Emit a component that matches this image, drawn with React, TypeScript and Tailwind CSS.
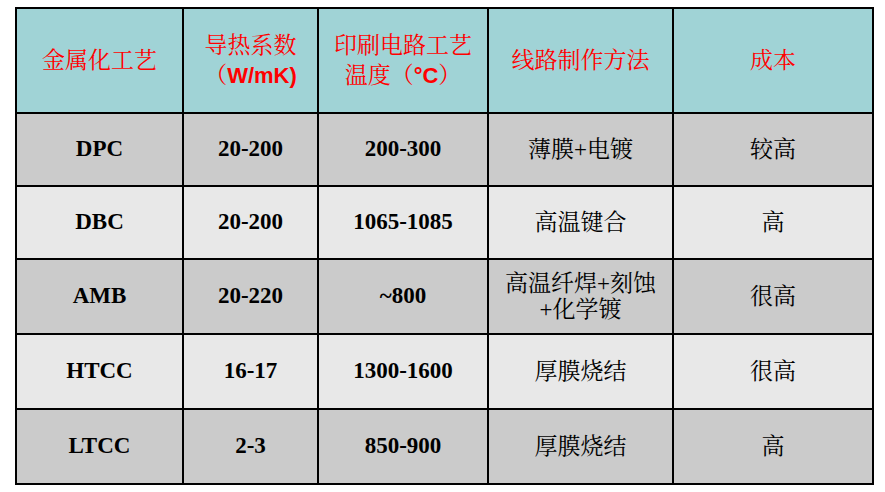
import React from "react";

const serif = "font-['Liberation_Serif','Noto_Serif_CJK_SC','Noto_Sans_CJK_SC',serif]";

type Row = { a: string; b: string; c: string; d: string[]; e: string; dark: boolean };

const rows: Row[] = [
  { a: "DPC", b: "20-200", c: "200-300", d: ["薄膜+电镀"], e: "较高", dark: true },
  { a: "DBC", b: "20-200", c: "1065-1085", d: ["高温键合"], e: "高", dark: false },
  { a: "AMB", b: "20-220", c: "~800", d: ["高温纤焊+刻蚀", "+化学镀"], e: "很高", dark: true },
  { a: "HTCC", b: "16-17", c: "1300-1600", d: ["厚膜烧结"], e: "很高", dark: false },
  { a: "LTCC", b: "2-3", c: "850-900", d: ["厚膜烧结"], e: "高", dark: true },
];

function Cell({ bg, children, className = "" }: { bg: string; children: React.ReactNode; className?: string }) {
  return (
    <div className={`flex flex-col items-center justify-center text-center ${bg} ${className}`}>{children}</div>
  );
}

export default function App() {
  const hdr = "bg-[#a0d3d6] text-[#ff0000] text-[23px] leading-[30px]";
  return (
    <div className="w-[885px] h-[492px] bg-white pt-[7px] pl-[15px]">
      <div
        className={`grid w-fit bg-black p-[2px] gap-[2px] grid-cols-[165px_133px_168px_183px_198px] grid-rows-[103px_71px_71px_73px_73px_73px] ${serif}`}
      >
        <Cell bg={hdr}>
          <span>金属化工艺</span>
        </Cell>
        <Cell bg={hdr}>
          <span>导热系数</span>
          <span>
            （<span className="font-['Liberation_Sans',sans-serif] font-bold text-[22px]">W/mK)</span>
          </span>
        </Cell>
        <Cell bg={hdr}>
          <span>印刷电路工艺</span>
          <span>
            温度（<span className="font-['Liberation_Sans',sans-serif] font-bold text-[22px]">°C</span>）
          </span>
        </Cell>
        <Cell bg={hdr}>
          <span>线路制作方法</span>
        </Cell>
        <Cell bg={hdr}>
          <span>成本</span>
        </Cell>
        {rows.map((r) => {
          const bg = r.dark ? "bg-[#cbcbcb]" : "bg-[#e8e8e8]";
          const num = `${bg} text-black text-[23px] font-bold`;
          const cn = `${bg} text-black text-[23px] leading-[26px]`;
          return (
            <React.Fragment key={r.a}>
              <Cell bg={num}>{r.a}</Cell>
              <Cell bg={num}>{r.b}</Cell>
              <Cell bg={num}>{r.c}</Cell>
              <Cell bg={cn}>
                {r.d.map((t) => (
                  <span key={t}>{t}</span>
                ))}
              </Cell>
              <Cell bg={cn}>{r.e}</Cell>
            </React.Fragment>
          );
        })}
      </div>
    </div>
  );
}
